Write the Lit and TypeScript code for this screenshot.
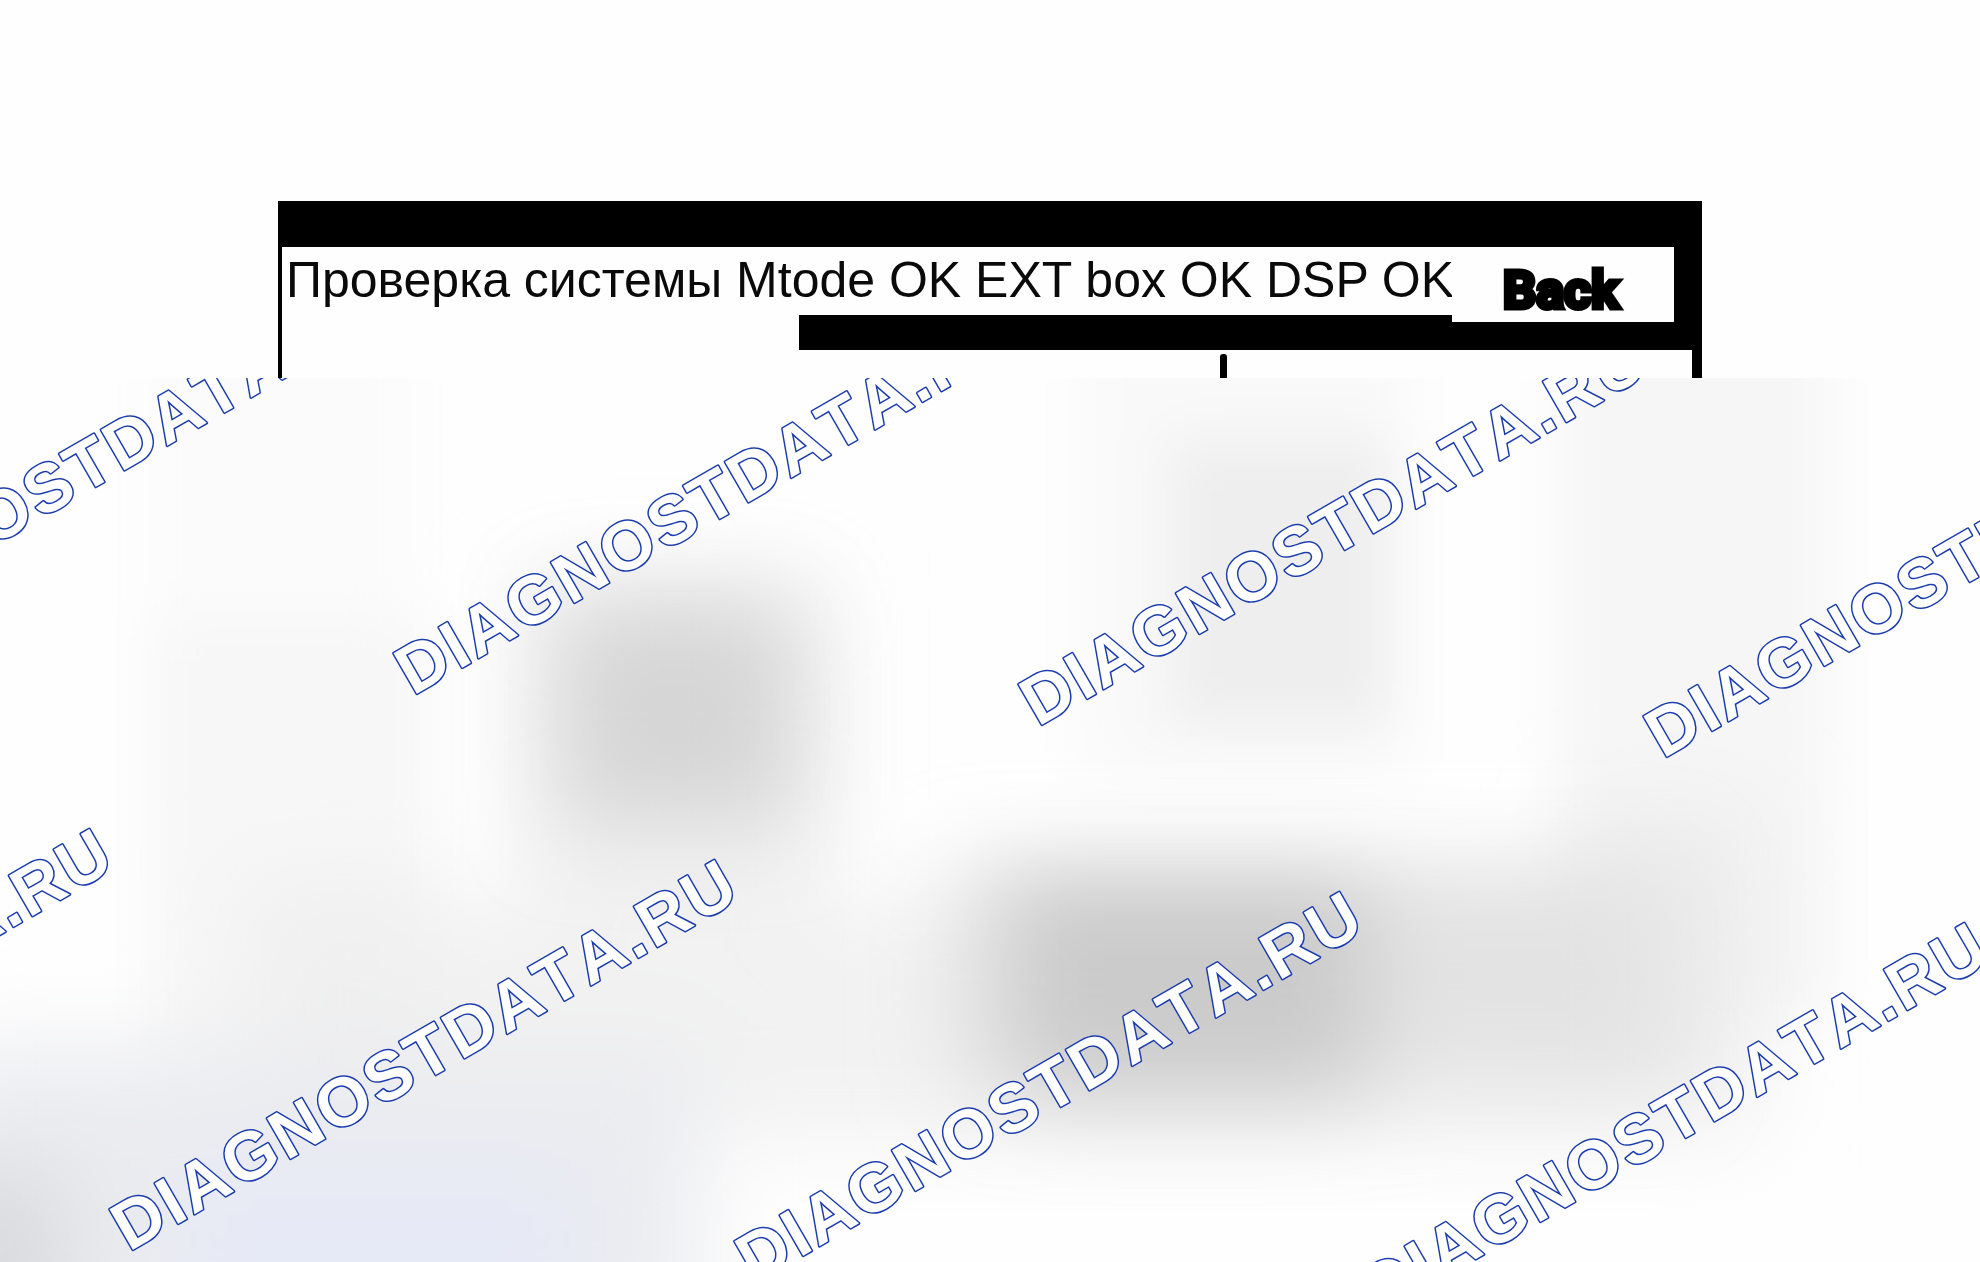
import { LitElement, html, svg, css } from "lit";
import { customElement } from "lit/decorators.js";

const MARK = "DIAGNOSTDATA.RU";

// Baseline start of every watermark, relative to the top of the backdrop.
const MARKS = [
  [-211, 286],
  [413, 318],
  [1038, 349],
  [1663, 381],
  [-496, 843],
  [129, 874],
  [754, 906],
  [1379, 937],
];

@customElement("status-panel")
class StatusPanel extends LitElement {
  static styles = css`
    :host {
      display: block;
    }
    .frame {
      display: grid;
      grid-template-columns: 517fr 653fr 222px 18px 10px;
      grid-template-rows: 68px 7px 28px 28px;
      padding: 46px 0 0 4px;
      background: #000;
      color: #0a0a0a;
    }
    .title {
      grid-column: 1 / 3;
      grid-row: 1;
      margin: 0;
      padding-left: 4px;
      background: #fefefe;
      font: 400 50px/66px "Liberation Sans", Arial, sans-serif;
      white-space: nowrap;
    }
    .blank {
      grid-column: 1;
      grid-row: 2 / 5;
      background: #fefefe;
    }
    .back {
      grid-column: 3;
      grid-row: 1 / 3;
      margin: 0;
      padding: 12px 4px 0 0;
      border: 0;
      background: #fefefe;
      color: #000;
      font: 700 52px/62px Roboto, "Liberation Sans", Arial, sans-serif;
      -webkit-text-stroke: 5px #000;
      cursor: pointer;
    }
    .body {
      grid-column: 2 / 5;
      grid-row: 4;
      display: flex;
      padding: 4px 0 0 421px;
      background: #fefefe;
    }
    .tick {
      width: 7px;
      border-radius: 3px 3px 0 0;
      background: #000;
    }
  `;

  render() {
    return html`
      <section class="frame">
        <h1 class="title">Проверка системы Mtode OK EXT box OK DSP OK</h1>
        <div class="blank"></div>
        <button class="back" type="button">Back</button>
        <div class="body"><div class="tick"></div></div>
      </section>
    `;
  }
}

@customElement("watermark-backdrop")
class WatermarkBackdrop extends LitElement {
  static styles = css`
    :host {
      display: block;
      position: relative;
      overflow: hidden;
      background: #fefefe;
    }
    .art {
      position: absolute;
      inset: 0;
      width: 100%;
      height: 100%;
    }
    .mark {
      fill: #fff;
      stroke: var(--edge, #1a3cac);
      stroke-width: var(--edge-width, 3px);
      stroke-linejoin: round;
      font: 700 68px "Liberation Sans", Arial, sans-serif;
      letter-spacing: 3px;
      font-kerning: none;
    }
    .core {
      --edge: none;
      --edge-width: 0;
    }
  `;

  render() {
    return html`
      <svg class="art" aria-hidden="true">
        <defs>
          <filter id="soft" x="-50%" y="-50%" width="200%" height="200%">
            <feGaussianBlur stdDeviation="45" />
          </filter>
          <filter id="mid" x="-50%" y="-50%" width="200%" height="200%">
            <feGaussianBlur stdDeviation="28" />
          </filter>
        </defs>
        <g filter="url(#mid)">
          <rect x="150" y="-60" width="260" height="480" fill="#fbfbfb" />
          <rect x="150" y="240" width="280" height="480" fill="#f7f7f7" />
          <rect x="1080" y="-60" width="330" height="460" fill="#f9f9f9" />
          <rect x="1170" y="60" width="220" height="290" fill="#eeeeee" />
          <rect x="1560" y="-80" width="270" height="720" fill="#f6f6f6" />
        </g>
        <g filter="url(#soft)">
          <rect x="240" y="500" width="200" height="240" fill="#f0f0f0" />
          <rect x="520" y="200" width="310" height="340" fill="#f1f1f1" />
          <rect x="430" y="530" width="1330" height="230" fill="#f2f2f2" />
          <rect x="1580" y="430" width="180" height="270" fill="#ededed" />
          <rect x="-60" y="670" width="760" height="300" fill="#ebecf0" />
          <rect x="180" y="790" width="400" height="200" fill="#e6e9f6" />
          <rect x="-120" y="790" width="190" height="240" fill="#dadbdf" />
        </g>
        <g filter="url(#soft)">
          <rect x="560" y="225" width="235" height="220" fill="#d6d6d6" />
          <rect x="950" y="490" width="720" height="215" fill="#e3e3e3" />
          <rect x="1010" y="490" width="360" height="230" fill="#cbcbcb" />
        </g>
        ${MARKS.map(
          ([x, y], i) => svg`
            <text id="mark-${i}" class="mark" transform="translate(${x} ${y}) rotate(-30)">${MARK}</text>
            <use class="core" href="#mark-${i}" />`,
        )}
      </svg>
    `;
  }
}

@customElement("app-root")
class AppRoot extends LitElement {
  static styles = css`
    :host {
      display: flex;
      flex-direction: column;
      min-height: 100vh;
      background: #fefefe;
    }
    .screen {
      padding: 201px 278px 0;
    }
    .backdrop {
      flex: 1;
    }
  `;

  render() {
    return html`
      <main class="screen"><status-panel></status-panel></main>
      <watermark-backdrop class="backdrop"></watermark-backdrop>
    `;
  }
}
